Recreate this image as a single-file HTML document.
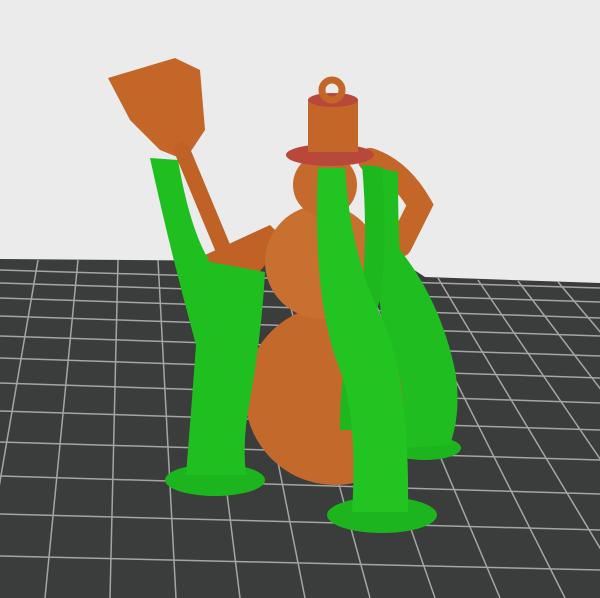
<!DOCTYPE html>
<html><head><style>html,body{margin:0;padding:0;background:#ebebeb}svg{display:block}</style></head>
<body>
<svg width="600" height="598" viewBox="0 0 600 598" xmlns="http://www.w3.org/2000/svg">
<rect width="600" height="598" fill="#ebebeb"/>
<polygon points="0,259 390,262 408,266 425,277 600,283 600,598 0,598" fill="#3b3c3c"/>
<g stroke="#a5a5a5" stroke-width="1.5" fill="none">
<path d="M0,270 L600,288 M0,283 L600,302 M0,298 L600,318 M0,316 L600,336 M0,336 L600,356 M0,358 L600,378 M0,383 L600,403 M0,411 L600,430 M0,442 L600,460 M0,476 L600,494 M0,514 L600,530 M0,556 L600,570"/>
<path d="M38,260 L-20,598 M78,260 L45,598 M118,260 L110,598 M158,260 L176,598 M198,260 L240,598 M238,261 L305,598 M278,261 L370,598 M318,262 L435,598 M358,262 L500,598 M398,266 L565,598 M438,278 L630,598 M478,280 L695,598 M518,281 L760,598 M558,282 L825,598"/>
</g>
<!-- shovel -->
<polygon points="108,78 175,58 200,70 205,130 185,160 160,150 130,120" fill="#c46628"/>
<path d="M182,150 L232,270" stroke="#c06226" stroke-width="16" stroke-linecap="round"/>
<polygon points="205,255 270,225 285,240 245,290 220,295" fill="#c06226"/>
<!-- right arm -->
<path d="M370,160 Q400,170 420,205 L400,245" stroke="#c46628" stroke-width="24" fill="none" stroke-linecap="round"/>
<!-- body -->
<circle cx="335" cy="395" r="90" fill="#c4692c"/>
<circle cx="322" cy="262" r="57" fill="#c8702f"/>
<circle cx="325" cy="185" r="32" fill="#c46a2c"/>
<!-- hat -->
<ellipse cx="330" cy="155" rx="44" ry="11" fill="#b8483a"/>
<rect x="308" y="100" width="50" height="52" fill="#c46628"/>
<ellipse cx="333" cy="100" rx="25" ry="7" fill="#b8483a"/>
<circle cx="332" cy="90" r="10" fill="none" stroke="#c46628" stroke-width="7"/>
<!-- green supports -->
<ellipse cx="425" cy="448" rx="36" ry="12" fill="#1db51d"/>
<path d="M378,168 L398,172 Q398,230 400,250 Q440,300 455,370 Q462,410 450,445 L402,448 Q408,400 395,360 Q375,320 380,260 Q375,210 378,168Z" fill="#1fbd1f"/>
<ellipse cx="215" cy="480" rx="50" ry="16" fill="#1db51d"/>
<path d="M150,158 L178,160 Q190,230 210,262 L265,272 Q262,330 250,400 Q242,440 246,475 L186,475 Q192,400 196,345 Q170,250 150,158Z" fill="#1fbf1f"/>
<path d="M362,165 L382,167 Q388,250 380,300 Q360,360 355,430 L340,430 Q340,350 362,290 Q368,230 362,165Z" fill="#1db81d"/>
<ellipse cx="382" cy="515" rx="55" ry="18" fill="#1db51d"/>
<path d="M318,168 L345,168 Q350,250 378,310 Q410,370 408,512 L352,512 Q358,420 340,370 Q312,300 318,168Z" fill="#22c422"/>
</svg>
</body></html>
